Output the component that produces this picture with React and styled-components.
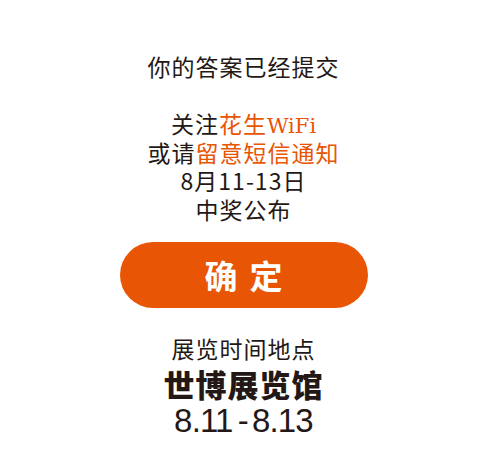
import React from "react";
import styled, { createGlobalStyle } from "styled-components";

const Global = createGlobalStyle`
  html, body { margin: 0; padding: 0; background: #ffffff; }
  body { font-family: "Noto Sans CJK SC", "Noto Sans", sans-serif; }
`;

const DARK = "#231815";
const ORANGE = "#e85504";

const Page = styled.div`
  width: 487px;
  height: 475px;
  display: flex;
  flex-direction: column;
  align-items: center;
  padding-top: 52px;
  box-sizing: border-box;
  color: ${DARK};
`;

const Message = styled.div`
  font-size: 23px;
  line-height: 28.6px;
  letter-spacing: 1px;
  text-align: center;
`;

const Line = styled.div`
  height: 28.6px;
`;

const Hi = styled.span`
  color: ${ORANGE};
`;

const Latin = styled.span`
  font-family: "DejaVu Serif", serif;
  font-size: 21px;
  line-height: 1;
  letter-spacing: 0;
  vertical-align: 0;
`;

const ConfirmButton = styled.button`
  margin-top: 18px;
  width: 248px;
  height: 66px;
  border: none;
  border-radius: 33px;
  background: ${ORANGE};
  color: #ffffff;
  font-family: "Noto Sans CJK SC", sans-serif;
  font-weight: 700;
  font-size: 33px;
  letter-spacing: 12px;
  padding: 0 0 0 12px;
  cursor: pointer;
`;

const Venue = styled.div`
  margin-top: 26px;
  display: flex;
  flex-direction: column;
  align-items: center;
  text-align: center;
`;

const Label = styled.div`
  font-size: 23px;
  line-height: 28px;
  letter-spacing: 1px;
`;

const Place = styled.div`
  font-size: 31px;
  font-weight: 900;
  line-height: 40px;
  letter-spacing: 1px;
  margin-top: 2px;
`;

const Dates = styled.div`
  font-family: "Liberation Sans", Arial, sans-serif;
  font-size: 33px;
  line-height: 34px;
  letter-spacing: -0.8px;
`;

const Dash = styled.span`
  margin: 0 4px 0 5px;
`;

export default function App() {
  return (
    <>
      <Global />
      <Page>
        <Message>
          <Line>你的答案已经提交</Line>
          <Line />
          <Line>
            关注<Hi>花生<Latin>WiFi</Latin></Hi>
          </Line>
          <Line>
            或请<Hi>留意短信通知</Hi>
          </Line>
          <Line>8月11-13日</Line>
          <Line>中奖公布</Line>
        </Message>
        <ConfirmButton>确定</ConfirmButton>
        <Venue>
          <Label>展览时间地点</Label>
          <Place>世博展览馆</Place>
          <Dates>
            8.11<Dash>-</Dash>8.13
          </Dates>
        </Venue>
      </Page>
    </>
  );
}
